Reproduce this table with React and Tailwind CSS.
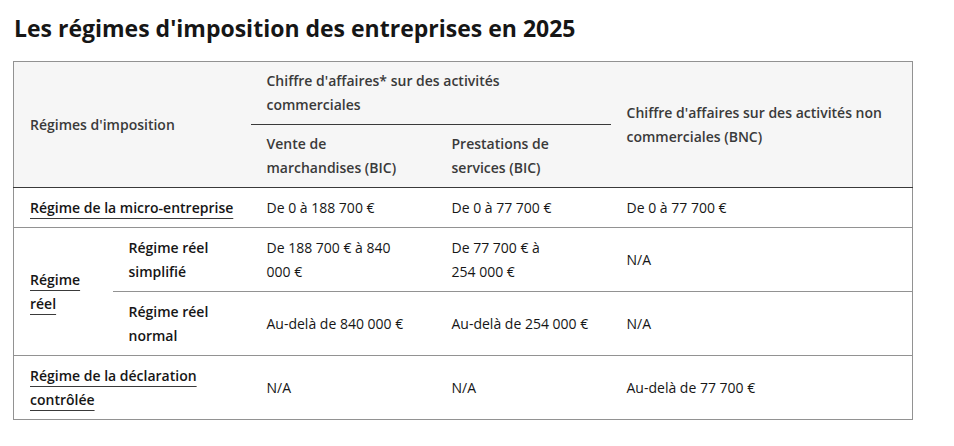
export default function App() {
  const th = 'px-4 py-[7px] text-left align-middle font-semibold text-[#3a3a3a]';
  const td = 'px-4 py-[7.5px] align-middle text-[#161616]';
  const link = 'underline decoration-1 underline-offset-[5px] decoration-[#3a3a3a]';

  return (
    <div className="bg-white px-[13px] pt-[12px] font-['Open_Sans','Liberation_Sans',sans-serif] text-[14px] leading-6 text-[#161616]">
      <h2 className="mb-[17px] pl-px text-[23px] font-bold leading-[32px] text-[#161616]">
        Les régimes d'imposition des entreprises en 2025
      </h2>
      <table className="w-[900px] table-fixed border-collapse border border-[#929292]">
        <colgroup>
          <col className="w-[99px]" />
          <col className="w-[138px]" />
          <col className="w-[185px]" />
          <col className="w-[175px]" />
          <col className="w-[302px]" />
        </colgroup>
        <thead className="bg-[#f6f6f6]">
          <tr>
            <th colSpan={2} rowSpan={2} className={th}>
              Régimes d'imposition
            </th>
            <th colSpan={2} className={`${th} border-b border-[#3a3a3a]`}>
              Chiffre d'affaires* sur des activités commerciales
            </th>
            <th rowSpan={2} className={th}>
              Chiffre d'affaires sur des activités non commerciales (BNC)
            </th>
          </tr>
          <tr className="border-b border-[#3a3a3a]">
            <th className={th}>Vente de marchandises (BIC)</th>
            <th className={th}>Prestations de services (BIC)</th>
          </tr>
        </thead>
        <tbody>
          <tr className="border-b border-[#929292]">
            <td colSpan={2} className={td}>
              <span className={`${link} font-semibold`}>Régime de la micro-entreprise</span>
            </td>
            <td className={td}>De 0 à 188 700 €</td>
            <td className={td}>De 0 à 77 700 €</td>
            <td className={td}>De 0 à 77 700 €</td>
          </tr>
          <tr className="border-b border-[#929292]">
            <td rowSpan={2} className={`${td} border-b border-[#929292]`}>
              <span className={`${link} font-semibold`}>Régime réel</span>
            </td>
            <td className={`${td} font-semibold`}>Régime réel simplifié</td>
            <td className={td}>
              De 188 700 € à 840
              <br />
              000 €
            </td>
            <td className={td}>
              De 77 700 € à
              <br />
              254 000 €
            </td>
            <td className={td}>N/A</td>
          </tr>
          <tr className="border-b border-[#929292]">
            <td className={`${td} font-semibold`}>Régime réel normal</td>
            <td className={td}>Au-delà de 840 000 €</td>
            <td className={td}>Au-delà de 254 000 €</td>
            <td className={td}>N/A</td>
          </tr>
          <tr>
            <td colSpan={2} className={td}>
              <span className={`${link} font-semibold`}>Régime de la déclaration contrôlée</span>
            </td>
            <td className={td}>N/A</td>
            <td className={td}>N/A</td>
            <td className={td}>Au-delà de 77 700 €</td>
          </tr>
        </tbody>
      </table>
    </div>
  );
}
